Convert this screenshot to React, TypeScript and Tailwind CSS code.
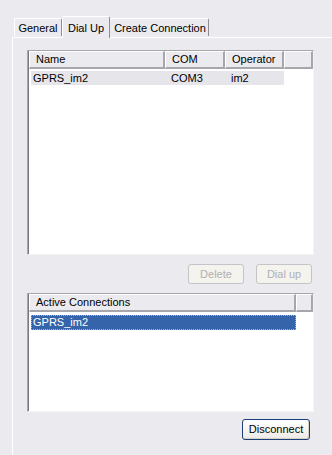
import React from "react";

const font = { fontFamily: '"Liberation Sans", Arial, sans-serif' };

function HeaderCell({ w, children, last }: { w: string; children?: React.ReactNode; last?: boolean }) {
  return (
    <div
      className={`${w} h-[18px] flex items-center pl-[6px] bg-[#ebeaee] border-t border-l border-t-white border-l-white border-b-2 border-r-2 border-b-[#a7a6aa] border-r-[#a7a6aa] ${last ? "flex-1" : ""}`}
    >
      {children}
    </div>
  );
}

export default function App() {
  return (
    <div
      className="w-[332px] h-[455px] bg-[#ebeaef] text-[11px] text-black flex flex-col pt-[16px] overflow-hidden"
      style={font}
    >
      {/* Tabs */}
      <div className="flex items-end ml-[14px] h-[21px] relative z-10">
        <div className="h-[18px] w-[48px] flex items-center justify-center border-t border-l border-r border-t-white border-l-white border-r-[#8e8d92] rounded-t-[2px] mb-[1px] pt-[1px]">
          General
        </div>
        <div className="h-[22px] w-[48px] flex items-start pt-[3px] justify-center border-t border-l border-r border-t-white border-l-white border-r-[#8e8d92] rounded-t-[2px] bg-[#ebeaef] -mb-px">
          Dial Up
        </div>
        <div className="h-[18px] w-[99px] flex items-center justify-center border-t border-r border-t-white border-r-[#8e8d92] rounded-t-[2px] mb-[1px] pt-[1px] pl-[2px]">
          Create Connection
        </div>
      </div>

      {/* Panel */}
      <div className="flex-1 ml-[12px] border-t border-l border-white flex flex-col pl-[14px] pr-[18px] pt-[12px]">
        {/* List 1 */}
        <div className="h-[205px] bg-white border-t border-l border-t-[#a7a6aa] border-l-[#a7a6aa] border-b border-r border-b-[#f4f3f6] border-r-[#f4f3f6] flex flex-col">
          <div className="flex-1 border-l border-[#7a7980] flex flex-col">
            <div className="flex">
              <HeaderCell w="w-[136px]">Name</HeaderCell>
              <HeaderCell w="w-[60px]">COM</HeaderCell>
              <HeaderCell w="w-[59px]">Operator</HeaderCell>
              <HeaderCell w="" last />
            </div>
            <div className="flex h-[14px] items-center mt-[2px] ml-[2px] w-[253px] bg-[#e6e5ea]">
              <div className="w-[140px] pl-[2px]">GPRS_im2</div>
              <div className="w-[60px]">COM3</div>
              <div className="">im2</div>
            </div>
          </div>
        </div>

        {/* Buttons */}
        <div className="flex justify-end gap-[12px] mt-[9px] pr-[2px]">
          <div className="w-[56px] h-[20px] flex items-center justify-center border border-[#c5c4c8] rounded-[3px] text-[#b0afb3] bg-[#f4f3ee]">
            Delete
          </div>
          <div className="w-[56px] h-[20px] flex items-center justify-center border border-[#c5c4c8] rounded-[3px] text-[#b0afb3] bg-[#f4f3ee]">
            Dial up
          </div>
        </div>

        {/* List 2 */}
        <div className="h-[119px] mt-[9px] bg-white border-t border-l border-t-[#a7a6aa] border-l-[#a7a6aa] border-b border-r border-b-[#f4f3f6] border-r-[#f4f3f6] flex flex-col">
          <div className="flex-1 border-l border-[#7a7980] flex flex-col">
            <div className="flex">
              <HeaderCell w="w-[267px]">Active Connections</HeaderCell>
              <HeaderCell w="" last />
            </div>
            <div className="mt-[3px] ml-[2px] w-[265px] h-[15px] bg-[#3564ab] border border-dotted border-[#e0b050] text-white flex items-center pl-[1px]">
              GPRS_im2
            </div>
          </div>
        </div>

        {/* Disconnect */}
        <div className="flex justify-end mt-[7px] pr-[4px]">
          <div className="w-[68px] h-[21px] flex items-center justify-center border border-[#1c3e7a] rounded-[3px] bg-gradient-to-b from-white to-[#ecebe6] shadow-[inset_-1px_-1px_0_#d6d0c5]">
            Disconnect
          </div>
        </div>
      </div>
    </div>
  );
}
